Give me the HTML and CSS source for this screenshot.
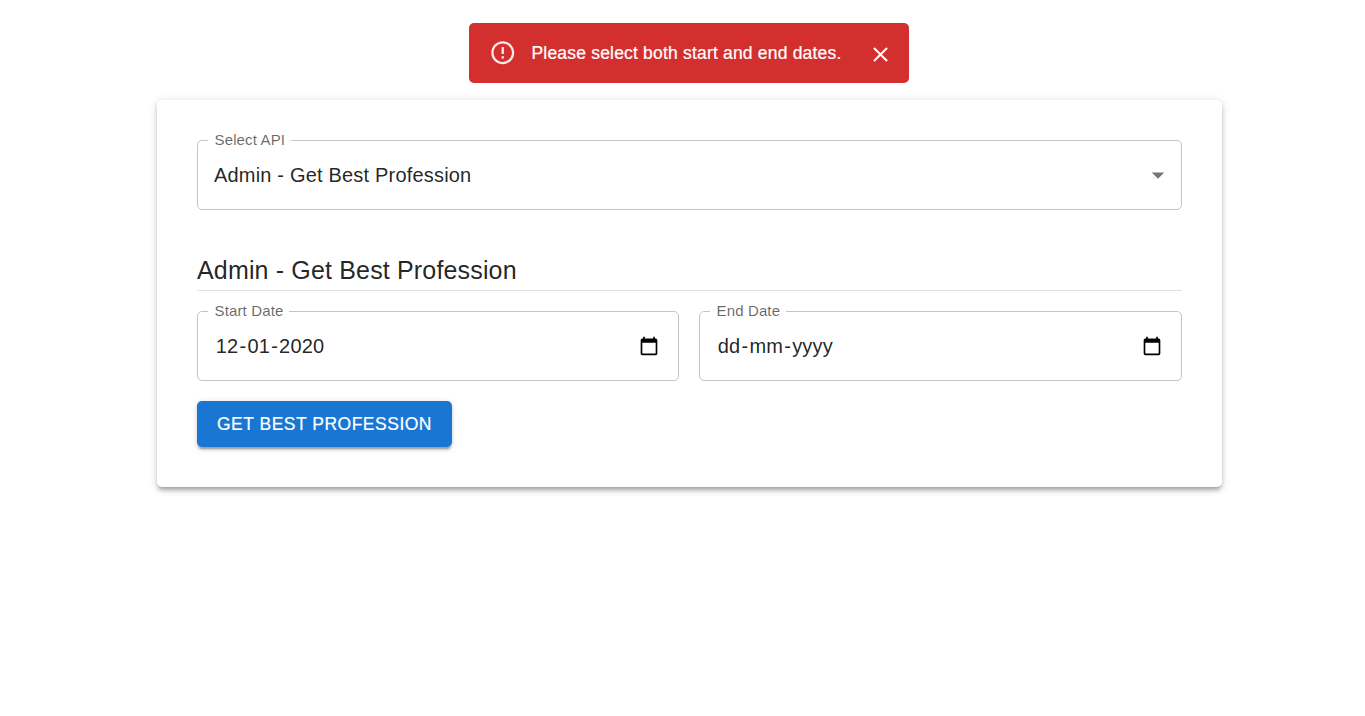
FILE: index.html
```html
<!DOCTYPE html>
<html lang="en">
<head>
<meta charset="utf-8">
<title>API Console</title>
<link rel="stylesheet" href="styles.css">
</head>
<body>
<main class="page">
  <div class="alert" role="alert">
    <svg class="alert-icon" viewBox="0 0 24 24"><path d="M11 15h2v2h-2zm0-8h2v6h-2zm.99-5C6.47 2 2 6.48 2 12s4.47 10 9.99 10C17.52 22 22 17.52 22 12S17.52 2 11.99 2zM12 20c-4.42 0-8-3.58-8-8s3.58-8 8-8 8 3.58 8 8-3.58 8-8 8z"/></svg>
    <span class="alert-text">Please select both start and end dates.</span>
    <svg class="alert-close" viewBox="0 0 24 24"><path d="M19 6.41L17.59 5 12 10.59 6.41 5 5 6.41 10.59 12 5 17.59 6.41 19 12 13.41 17.59 19 19 17.59 13.41 12z"/></svg>
  </div>
  <section class="card">
    <fieldset class="field">
      <legend class="label">Select API</legend>
      <div class="value select">
        <span>Admin - Get Best Profession</span>
        <svg class="arrow" viewBox="0 0 24 24"><path d="M7 10l5 5 5-5z"/></svg>
      </div>
    </fieldset>
    <h6 class="title">Admin - Get Best Profession</h6>
    <div class="dates">
      <fieldset class="field">
        <legend class="label">Start Date</legend>
        <div class="value date">
          <span class="date-text"><span>12</span><i>-</i><span>01</span><i>-</i><span>2020</span></span>
          <svg class="calendar" viewBox="0 0 24 24"><path d="M20 3h-1V1h-2v2H7V1H5v2H4c-1.1 0-2 .9-2 2v16c0 1.1.9 2 2 2h16c1.1 0 2-.9 2-2V5c0-1.1-.9-2-2-2zm0 18H4V8h16v13z"/></svg>
        </div>
      </fieldset>
      <fieldset class="field">
        <legend class="label">End Date</legend>
        <div class="value date">
          <span class="date-text"><span>dd</span><i>-</i><span>mm</span><i>-</i><span>yyyy</span></span>
          <svg class="calendar" viewBox="0 0 24 24"><path d="M20 3h-1V1h-2v2H7V1H5v2H4c-1.1 0-2 .9-2 2v16c0 1.1.9 2 2 2h16c1.1 0 2-.9 2-2V5c0-1.1-.9-2-2-2zm0 18H4V8h16v13z"/></svg>
        </div>
      </fieldset>
    </div>
    <button class="submit" type="button">Get Best Profession</button>
  </section>
</main>
</body>
</html>
```
FILE: styles.css
```css
* { box-sizing: border-box; }
body {
  margin: 0;
  background: #fff;
  color: rgba(0, 0, 0, 0.87);
  font-family: "Liberation Sans", Arial, sans-serif;
}
.page {
  width: 1065px;
  min-height: 100vh;
  margin-left: 157px;
  padding-top: 23px;
}
.alert {
  display: flex;
  align-items: center;
  width: 440px;
  height: 60px;
  margin: 0 auto 17px 312px;
  padding: 0 16px 0 20px;
  border-radius: 5px;
  background: #d32f2f;
  color: #fff;
}
.alert-icon {
  width: 27.5px;
  height: 27.5px;
  margin-right: 15px;
  fill: #fff;
  opacity: 0.9;
}
.alert-text {
  flex: 1;
  font-size: 17.5px;
  line-height: 25px;
  letter-spacing: 0.19px;
  white-space: nowrap;
  -webkit-text-stroke: 0.2px #fff;
}
.alert-close {
  width: 25px;
  height: 25px;
  margin-top: 3px;
  fill: #fff;
}
.card {
  height: 387px;
  padding: 31px 40px 40px;
  border-radius: 5px;
  background: #fff;
  box-shadow: 0 3.75px 3.75px -2.5px rgba(0, 0, 0, 0.2), 0 3.75px 5px rgba(0, 0, 0, 0.14), 0 1.25px 10px rgba(0, 0, 0, 0.12);
}
.field {
  height: 79px;
  min-width: 0;
  margin: 0;
  padding: 0 10px;
  border: 1px solid #c4c4c4;
  border-radius: 5px;
}
.label {
  height: 19px;
  padding: 0 6px 0 6.5px;
  color: rgba(0, 0, 0, 0.6);
  font-size: 15px;
  line-height: 17px;
  letter-spacing: 0.14px;
  white-space: nowrap;
}
.value {
  display: flex;
  align-items: center;
  justify-content: space-between;
  height: 50px;
  padding: 0 0 0 6px;
  font-size: 20px;
  letter-spacing: 0.1876px;
}
.arrow {
  width: 30px;
  height: 30px;
  margin-right: -2px;
  fill: rgba(0, 0, 0, 0.54);
}
.title {
  height: 41px;
  margin: 40px 0 11px;
  border-bottom: 1px solid #e0e0e0;
  font-size: 25px;
  font-weight: 400;
  line-height: 40px;
  letter-spacing: 0.16px;
}
.dates {
  display: grid;
  grid-template-columns: 482px 483px;
  column-gap: 20px;
}
.date {
  padding: 0 9px 0 7.75px;
}
.date-text {
  display: flex;
  gap: 1.1px;
}
.date-text i { font-style: normal; }
.calendar {
  width: 20px;
  height: 20px;
  margin-bottom: 1px;
  fill: #000;
}
.submit {
  display: block;
  width: 255px;
  height: 46px;
  margin-top: 20px;
  padding: 0;
  border: 0;
  border-radius: 5px;
  background: #1976d2;
  box-shadow: 0 3.75px 1.25px -2.5px rgba(0, 0, 0, 0.2), 0 2.5px 2.5px rgba(0, 0, 0, 0.14), 0 1.25px 6.25px rgba(0, 0, 0, 0.12);
  color: #fff;
  font-family: inherit;
  font-size: 17.5px;
  letter-spacing: 0.5px;
  text-transform: uppercase;
  -webkit-text-stroke: 0.2px #fff;
}
```
